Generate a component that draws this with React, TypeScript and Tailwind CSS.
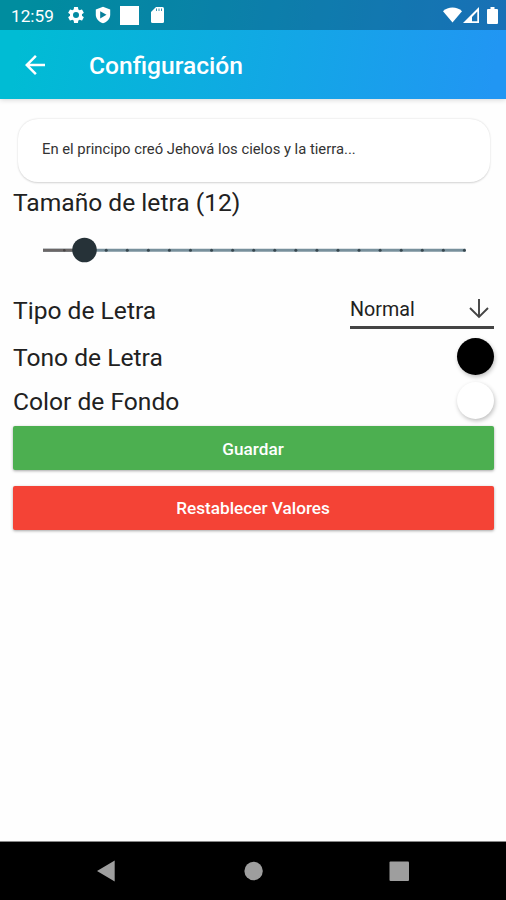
import React from "react";

const TICKS = Array.from({ length: 18 }, (_, i) => i + 3);

function StatusBar() {
  return (
    <div className="flex h-[30px] items-center bg-black/25 pl-[11px] pr-[8px] text-white">
      <span className="w-[43px] whitespace-nowrap text-[17.2px] leading-[30px] pt-[2px]">12:59</span>
      <svg className="ml-[12px] size-[20px]" viewBox="0 0 24 24" fill="currentColor">
        <path d="M19.14 12.94c.04-.3.06-.61.06-.94 0-.32-.02-.64-.07-.94l2.03-1.58a.49.49 0 0 0 .12-.61l-1.92-3.32a.488.488 0 0 0-.59-.22l-2.39.96c-.5-.38-1.03-.7-1.62-.94l-.36-2.54a.484.484 0 0 0-.48-.41h-3.84c-.24 0-.43.17-.47.41l-.36 2.54c-.59.24-1.13.57-1.62.94l-2.39-.96c-.22-.08-.47 0-.59.22L2.74 8.87c-.12.21-.08.47.12.61l2.03 1.58c-.05.3-.09.63-.09.94s.02.64.07.94l-2.03 1.58a.49.49 0 0 0-.12.61l1.92 3.32c.12.22.37.29.59.22l2.39-.96c.5.38 1.03.7 1.62.94l.36 2.54c.05.24.24.41.48.41h3.84c.24 0 .44-.17.47-.41l.36-2.54c.59-.24 1.13-.56 1.62-.94l2.39.96c.22.08.47 0 .59-.22l1.92-3.32c.12-.22.07-.47-.12-.61l-2.01-1.58zM12 15.6A3.6 3.6 0 1 1 12 8.4a3.6 3.6 0 0 1 0 7.2z" />
      </svg>
      <svg className="ml-[9px] h-[18px] w-[16px]" viewBox="0 0 16 18">
        <path fill="currentColor" d="M8 .8 15.2 3.600v5.200c0 4-3 7.200-7.200 8.500C3.800 16 .8 12.800.8 8.800V3.600z" />
        <path className="fill-[#067f9b]" d="M5.200 5.200v7.200l6.300-3.600z" />
      </svg>
      <span className="ml-[9px] size-[19px] bg-white" />
      <svg className="ml-[12px] h-[16px] w-[13px]" viewBox="0 0 13 16">
        <path fill="currentColor" d="M5 0h6.500A1.500 1.500 0 0 1 13 1.500v13a1.500 1.500 0 0 1-1.500 1.500h-10A1.500 1.500 0 0 1 0 14.500V5z" />
        <path className="stroke-[#3c93b0]" strokeWidth="1" d="M5.500 1.500v2.500M8 1.500v2.500M10.500 1.500v2.500" />
      </svg>
      <svg className="ml-auto h-[16px] w-[19px]" viewBox="0 0 19 16">
        <path fill="currentColor" d="M9.500 15.500 0 4.200C2.500 1.800 5.900.5 9.500.5S16.500 1.800 19 4.200z" />
      </svg>
      <svg className="ml-[1px] h-[16px] w-[16px]" viewBox="0 0 16 16">
        <path fill="currentColor" fillRule="evenodd" d="M16 0v16H0zM14.300 4.500v9.800H9V10z" />
      </svg>
      <svg className="ml-[8px] h-[17px] w-[11px]" viewBox="0 0 11 17">
        <path fill="currentColor" d="M3.500 0h4v2H10a1 1 0 0 1 1 1v13a1 1 0 0 1-1 1H1a1 1 0 0 1-1-1V3a1 1 0 0 1 1-1h2.500z" />
      </svg>
    </div>
  );
}

function Header() {
  return (
    <header className="h-[99px] bg-[linear-gradient(100deg,#00bcd4_5%,#2196f3_97%)] shadow-[0_1px_5px_rgba(0,0,0,0.16)]">
      <StatusBar />
      <div className="flex h-[69px] items-center pl-[20px] text-white">
        <svg className="size-[30px]" viewBox="0 0 24 24" fill="currentColor">
          <path d="M20 11H7.830l5.590-5.590L12 4l-8 8 8 8 1.410-1.410L7.830 13H20v-2z" />
        </svg>
        <h1 className="ml-[39px] pt-[2px] text-[24.6px] leading-[30px] font-medium">Configuración</h1>
      </div>
    </header>
  );
}

function SizeSlider() {
  return (
    <svg className="mt-[16px] ml-[30px] h-[32px] w-[440px]" viewBox="43 234 440 32">
      <path className="stroke-[#78909c]" strokeWidth="3" d="M43 250.300H465.500" />
      <path className="stroke-[#6b6767]" strokeWidth="3" d="M43 250.300H84" />
      <circle className="fill-[#4a4646]" cx="64.300" cy="250.300" r="1.300" />
      {TICKS.map((n) => (
        <circle key={n} className="fill-[#37474f]" cx={43 + n * 21.07} cy="250.300" r="1.500" />
      ))}
      <circle className="fill-[#263238]" cx="84.500" cy="250" r="12.300" />
    </svg>
  );
}

export default function App() {
  return (
    <div className="flex h-[900px] w-[506px] flex-col overflow-hidden bg-[#fefefe] font-[Roboto,sans-serif] text-[#212121]">
      <Header />
      <main className="flex flex-1 flex-col pl-[13px] pr-[12px] text-[24.6px] leading-[30px]">
        <div className="mr-[4px] ml-[5px] mt-[20px] flex h-[63px] items-center rounded-[20px] bg-white pl-[24px] text-[14.8px] shadow-[0_0.500px_2px_rgba(0,0,0,0.18)]">
          <span className="whitespace-nowrap pb-[3px] text-[#333]">En el principo creó Jehová los cielos y la tierra...</span>
        </div>
        <p className="mt-[6px]">Tamaño de letra (12)</p>
        <SizeSlider />
        <div className="mt-[26px] flex h-[37px] justify-between">
          <span className="pt-[4px]">Tipo de Letra</span>
          <div className="flex h-[37px] w-[144px] items-center justify-between border-b-[3px] border-[#444] text-[19.7px]">
            <span className="pt-[1px]">Normal</span>
            <svg className="mr-[4px] size-[22px] stroke-[#444]" viewBox="0 0 22 22" fill="none" strokeWidth="1.900">
              <path d="M11 1v18M2 10l9 9 9-9" />
            </svg>
          </div>
        </div>
        <div className="mt-[9px] flex h-[37px] items-start justify-between">
          <span className="pt-[5px]">Tono de Letra</span>
          <span className="size-[37px] rounded-full bg-black shadow-[1px_2px_4px_rgba(0,0,0,0.25)]" />
        </div>
        <div className="mt-[7px] flex h-[37px] items-start justify-between">
          <span className="pt-[5px]">Color de Fondo</span>
          <span className="size-[37px] rounded-full bg-white shadow-[1px_2px_4px_rgba(0,0,0,0.25)]" />
        </div>
        <button className="mt-[7px] h-[44px] rounded-[2px] bg-[#4caf50] pt-[1px] pr-[1px] text-[17.2px] font-medium text-white shadow-[0_1px_3px_rgba(0,0,0,0.35)]">
          Guardar
        </button>
        <button className="mt-[15.500px] h-[44px] rounded-[2px] bg-[#f44336] pr-[1px] text-[17.2px] font-medium text-white shadow-[0_1px_3px_rgba(0,0,0,0.35)]">
          Restablecer Valores
        </button>
      </main>
      <nav className="flex h-[59px] items-center border-t border-[#888] bg-black pl-[97px]">
        <svg className="h-[22px] w-[306px] flex-1 fill-[#9e9e9e]" viewBox="97 860 409 22">
          <path d="M97 871 114.700 860.500V881.500z" />
          <circle cx="253.600" cy="871" r="9.200" />
          <rect x="389.500" y="861.500" width="19.500" height="19.500" rx="1" />
        </svg>
      </nav>
    </div>
  );
}
